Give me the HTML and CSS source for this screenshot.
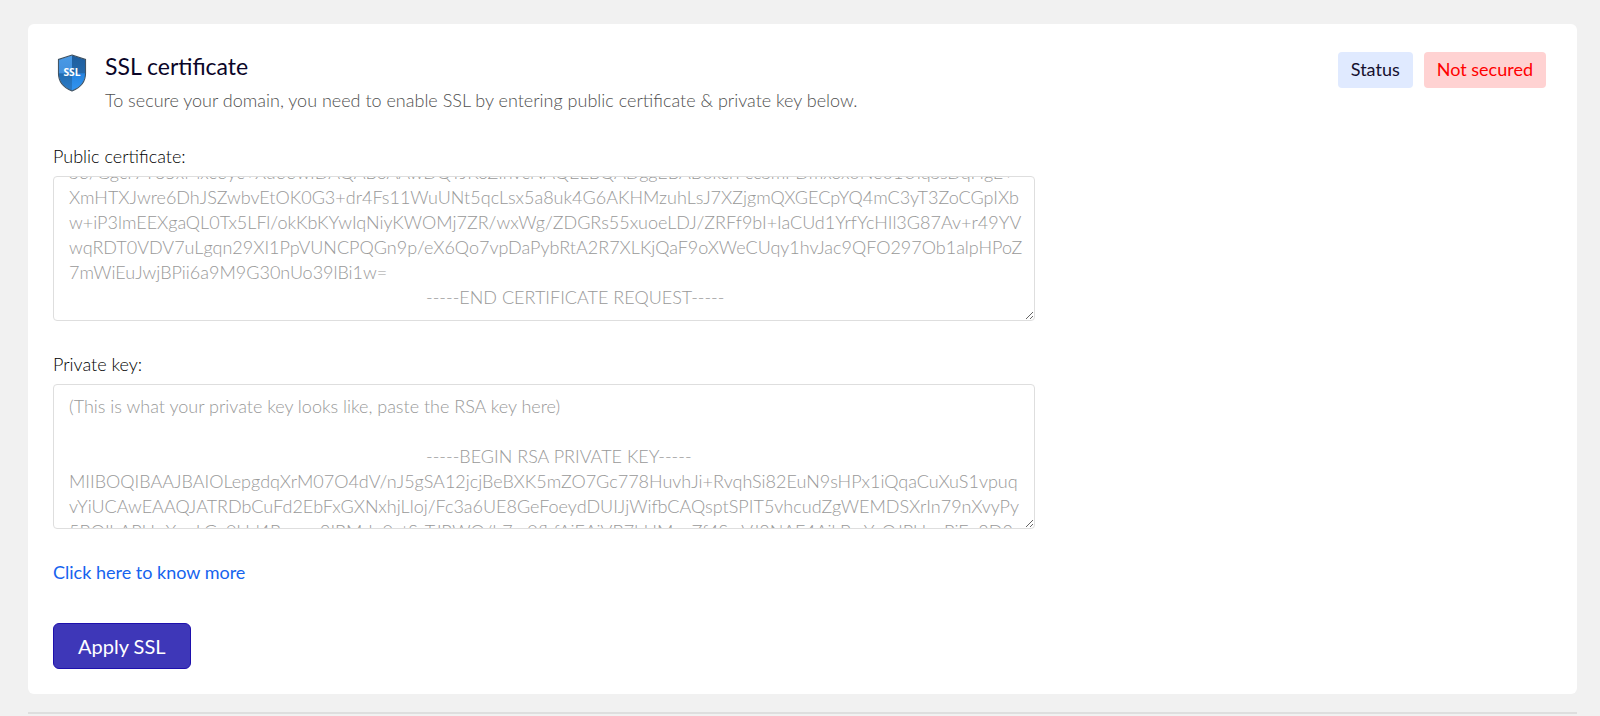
FILE: index.html
```html
<!DOCTYPE html>
<html lang="en">
<head>
<meta charset="utf-8">
<title>SSL certificate</title>
<link rel="stylesheet" href="styles.css">
</head>
<body>
<main class="page">
  <section class="card">
    <header class="card-header">
      <svg class="shield" viewBox="0 0 28 37" aria-hidden="true">
        <defs>
          <clipPath id="shield-shape"><path d="M14 1.2 27 5.4V19c0 8-5 13.600-13 16.800C6 32.600 1 27 1 19V5.400z"/></clipPath>
          <linearGradient id="left-face" x1="0" y1="0" x2="0" y2="1"><stop offset="0" stop-color="#4a9be8"/><stop offset=".5" stop-color="#4390dc"/><stop offset=".52" stop-color="#236cb0"/><stop offset="1" stop-color="#2b7cca"/></linearGradient>
          <linearGradient id="right-face" x1="0" y1="0" x2="0" y2="1"><stop offset="0" stop-color="#1d5c9c"/><stop offset=".5" stop-color="#2468aa"/><stop offset=".52" stop-color="#2584e0"/><stop offset="1" stop-color="#3396f2"/></linearGradient>
        </defs>
        <g clip-path="url(#shield-shape)">
          <path fill="url(#left-face)" d="M0 0h14v37H0z"/>
          <path fill="url(#right-face)" d="M14 0h14v37H14z"/>
        </g>
        <path class="shield-edge" d="M14 1 27.200 5.300V19c0 8-5.200 13.800-13.200 17C6 32.800.8 27 .8 19V5.300z"/>
        <text class="shield-text" x="14" y="21">SSL</text>
      </svg>
      <div class="heading">
        <h1 class="title">SSL certificate</h1>
        <p class="subtitle">To secure your domain, you need to enable SSL by entering public certificate &amp; private key below.</p>
      </div>
      <div class="badges">
        <span class="badge badge-label">Status</span>
        <span class="badge badge-danger">Not secured</span>
      </div>
    </header>
    <form class="form">
      <div class="field">
        <label class="label" for="certificate">Public certificate:</label>
        <textarea class="area" id="certificate" spellcheck="false">(This is what your certificate looks like, paste the certificate here)

	-----BEGIN CERTIFICATE REQUEST-----
S6/Ggcr7Y35xMxc6yc+Xu66wIDAQABoAAwDQYJKoZIhvcNAQELBQADggEBAB0kcrFccSmFDmxox0Ne01UIqSsDqHgE+
XmHTXJwre6DhJSZwbvEtOK0G3+dr4Fs11WuUNt5qcLsx5a8uk4G6AKHMzuhLsJ7XZjgmQXGECpYQ4mC3yT3ZoCGpIXb
w+iP3lmEEXgaQL0Tx5LFl/okKbKYwIqNiyKWOMj7ZR/wxWg/ZDGRs55xuoeLDJ/ZRFf9bI+IaCUd1YrfYcHIl3G87Av+r49YV
wqRDT0VDV7uLgqn29XI1PpVUNCPQGn9p/eX6Qo7vpDaPybRtA2R7XLKjQaF9oXWeCUqy1hvJac9QFO297Ob1alpHPoZ
7mWiEuJwjBPii6a9M9G30nUo39lBi1w=
	-----END CERTIFICATE REQUEST-----</textarea>
      </div>
      <div class="field">
        <label class="label" for="private-key">Private key:</label>
        <textarea class="area" id="private-key" spellcheck="false">(This is what your private key looks like, paste the RSA key here)

	-----BEGIN RSA PRIVATE KEY-----
MIIBOQIBAAJBAIOLepgdqXrM07O4dV/nJ5gSA12jcjBeBXK5mZO7Gc778HuvhJi+RvqhSi82EuN9sHPx1iQqaCuXuS1vpuq
vYiUCAwEAAQJATRDbCuFd2EbFxGXNxhjLloj/Fc3a6UE8GeFoeydDUIJjWifbCAQsptSPIT5vhcudZgWEMDSXrIn79nXvyPy
5BQIhAPU+XwrLGy0Hd4Roug+9IRMrlu0gtSvTJRWQ/b7m0fbfAiEAiVB7bUMynZf4SwVJ8NAF4AikBmYxOJPUxnPjEp8D2
	-----END RSA PRIVATE KEY-----</textarea>
      </div>
      <a class="link" href="#">Click here to know more</a>
      <button class="apply" type="button">Apply SSL</button>
    </form>
  </section>
  <hr class="divider">
</main>
<script src="script.js"></script>
</body>
</html>
```
FILE: styles.css
```css
* { box-sizing: border-box; }

body {
  margin: 0;
  background: #f1f1f1;
  color: #212529;
  font-family: Lato, "Open Sans", sans-serif;
  font-size: 18px;
  line-height: 25px;
}

.page { padding: 24px 23px 0 28px; }

.card {
  padding: 28px 31px 25px 25px;
  border-radius: 6px;
  background: #fff;
}

.card-header {
  display: flex;
  align-items: flex-start;
}

.shield {
  flex: none;
  width: 30px;
  height: 38px;
  margin: 2px 18px 0 4px;
}

.shield-edge { fill: none; stroke: #3c4f60; stroke-width: 1; }

.shield-text {
  fill: #fff;
  font-family: "Noto Sans", sans-serif;
  font-size: 10px;
  font-weight: 700;
  text-anchor: middle;
}

.heading { flex: 1; }

.title {
  margin: 0;
  color: #0a0528;
  font-size: 23px;
  font-weight: 400;
  line-height: 28px;
}

.subtitle {
  margin: 8px 0 0;
  color: #505050;
  font-weight: 300;
}

.badges {
  display: flex;
  gap: 11px;
}

.badge {
  padding: 5px 13px 6px;
  border-radius: 4px;
}

.badge-label { background: #e0eaff; color: #15102e; }
.badge-danger { background: #ffd2d2; color: #f00; }

.form {
  display: flex;
  flex-direction: column;
  align-items: flex-start;
  margin-top: 31px;
}

.field {
  width: 65.8%;
  margin-bottom: 31px;
}

.label {
  display: block;
  margin-bottom: 7px;
  color: #000;
  font-weight: 300;
}

.area {
  display: block;
  width: 100%;
  height: 145px;
  padding: 9px 15px 10px;
  border: 1px solid #dedede;
  border-radius: 4px;
  background: #fff;
  color: #999;
  font: inherit;
  font-weight: 300;
  white-space: pre;
  tab-size: 357px;
  overflow: hidden;
  resize: both;
}

.link {
  color: #1663ee;
  text-decoration: none;
}

.apply {
  margin-top: 38px;
  padding: 9px 24px;
  border: 1px solid #1e10ad;
  border-radius: 6px;
  background: #3e37b8;
  color: #fff;
  font: inherit;
  font-size: 20px;
  line-height: 26px;
}

.divider {
  height: 2px;
  margin: 18px 0 0;
  border: 0;
  background: #dedede;
}
```
FILE: script.js
```js
const certificate = document.getElementById("certificate");
certificate.scrollTop = certificate.scrollHeight;
```
